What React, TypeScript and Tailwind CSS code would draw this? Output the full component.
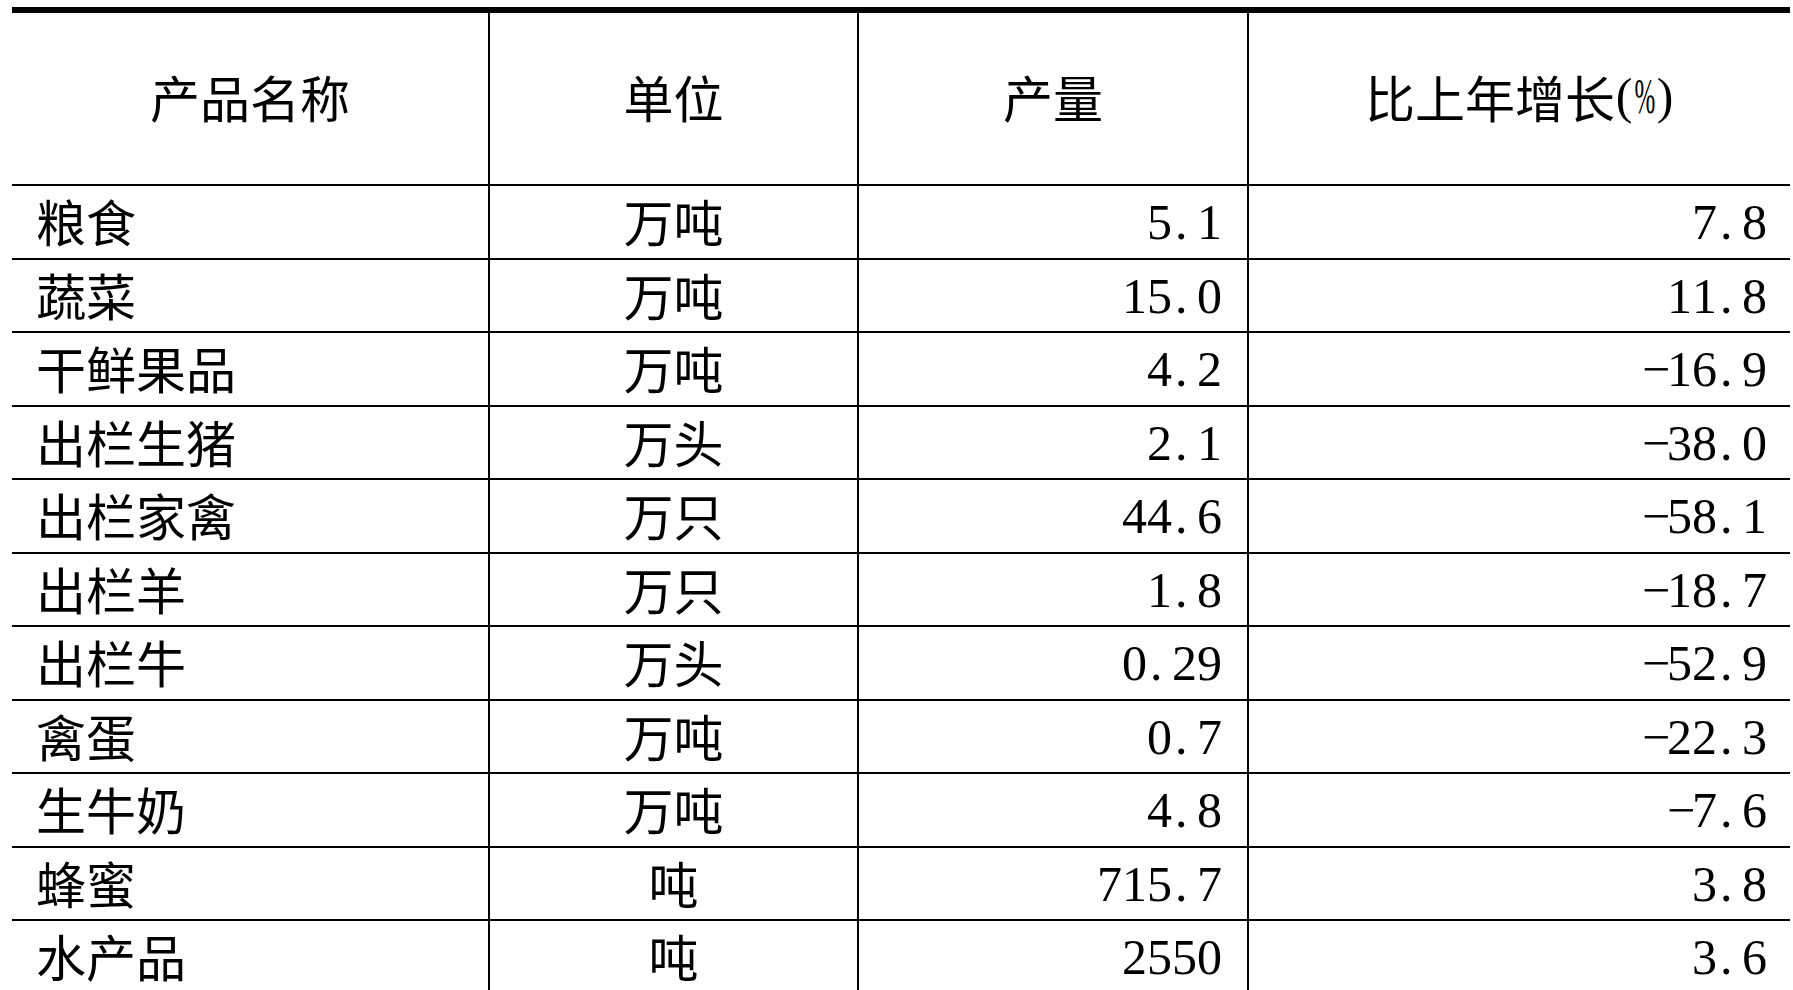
import React from 'react';

interface ProductRow {
  name: string;
  unit: string;
  output: string;
  growth: string;
}

const rows: ProductRow[] = [
  { name: '粮食', unit: '万吨', output: '5.1', growth: '7.8' },
  { name: '蔬菜', unit: '万吨', output: '15.0', growth: '11.8' },
  { name: '干鲜果品', unit: '万吨', output: '4.2', growth: '-16.9' },
  { name: '出栏生猪', unit: '万头', output: '2.1', growth: '-38.0' },
  { name: '出栏家禽', unit: '万只', output: '44.6', growth: '-58.1' },
  { name: '出栏羊', unit: '万只', output: '1.8', growth: '-18.7' },
  { name: '出栏牛', unit: '万头', output: '0.29', growth: '-52.9' },
  { name: '禽蛋', unit: '万吨', output: '0.7', growth: '-22.3' },
  { name: '生牛奶', unit: '万吨', output: '4.8', growth: '-7.6' },
  { name: '蜂蜜', unit: '吨', output: '715.7', growth: '3.8' },
  { name: '水产品', unit: '吨', output: '2550', growth: '3.6' },
];

const cjk = "font-['Noto_Sans_CJK_SC',sans-serif]";
const serif = "font-['Liberation_Serif',serif]";

// half-width cells, like the Song typeface in the source document
const Num: React.FC<{ value: string }> = ({ value }) => (
  <span className={`${serif} inline-flex leading-none`}>
    {value.split('').map((ch, i) => {
      if (ch === '.') {
        return (
          <span key={i} className="inline-block w-[0.5em] text-left pl-[0.06em]">
            .
          </span>
        );
      }
      if (ch === '-') {
        return (
          <span key={i} className="inline-block w-[0.5em] text-center">
            −
          </span>
        );
      }
      return (
        <span key={i} className="inline-block w-[0.5em] text-center">
          {ch}
        </span>
      );
    })}
  </span>
);

export default function App() {
  return (
    <div className="w-[1793px] h-[990px] overflow-hidden bg-white text-black">
      <div className="ml-[12px] mt-[7px] w-[1778px] border-t-[6px] border-black text-[50px]">
        {/* Header */}
        <div className="grid grid-cols-[476px_369px_390px_543px] h-[173px] border-b-2 border-black">
          <div className={`${cjk} flex items-center justify-center leading-none pb-[6px]`}>产品名称</div>
          <div className={`${cjk} flex items-center justify-center leading-none pb-[6px] border-l-2 border-black`}>
            单位
          </div>
          <div className={`${cjk} flex items-center justify-center leading-none pb-[6px] border-l-2 border-black`}>
            产量
          </div>
          <div className="flex items-center justify-center leading-none pb-[6px] border-l-2 border-black">
            <span className={cjk}>比上年增长</span>
            <span className={`${serif} inline-flex items-center`}>
              <span className="inline-block w-[0.36em] text-center">(</span>
              <span className="inline-flex w-[0.46em] justify-center">
                <span className="inline-block shrink-0 w-[0.84em] text-center scale-x-[0.5]">%</span>
              </span>
              <span className="inline-block w-[0.36em] text-center">)</span>
            </span>
          </div>
        </div>

        {/* Rows */}
        {rows.map((r, i) => (
          <div
            key={r.name}
            className={`grid grid-cols-[476px_369px_390px_543px] border-b-2 border-black ${
              i % 2 === 0 ? 'h-[74px]' : 'h-[73px]'
            }`}
          >
            <div className={`${cjk} flex items-center pl-[24px] pb-[4px] leading-none`}>{r.name}</div>
            <div
              className={`${cjk} flex items-center justify-center pb-[4px] leading-none border-l-2 border-black`}
            >
              {r.unit}
            </div>
            <div className="flex items-center justify-end pr-[25px] border-l-2 border-black">
              <Num value={r.output} />
            </div>
            <div className="flex items-center justify-end pr-[23px] border-l-2 border-black">
              <Num value={r.growth} />
            </div>
          </div>
        ))}
      </div>
    </div>
  );
}
